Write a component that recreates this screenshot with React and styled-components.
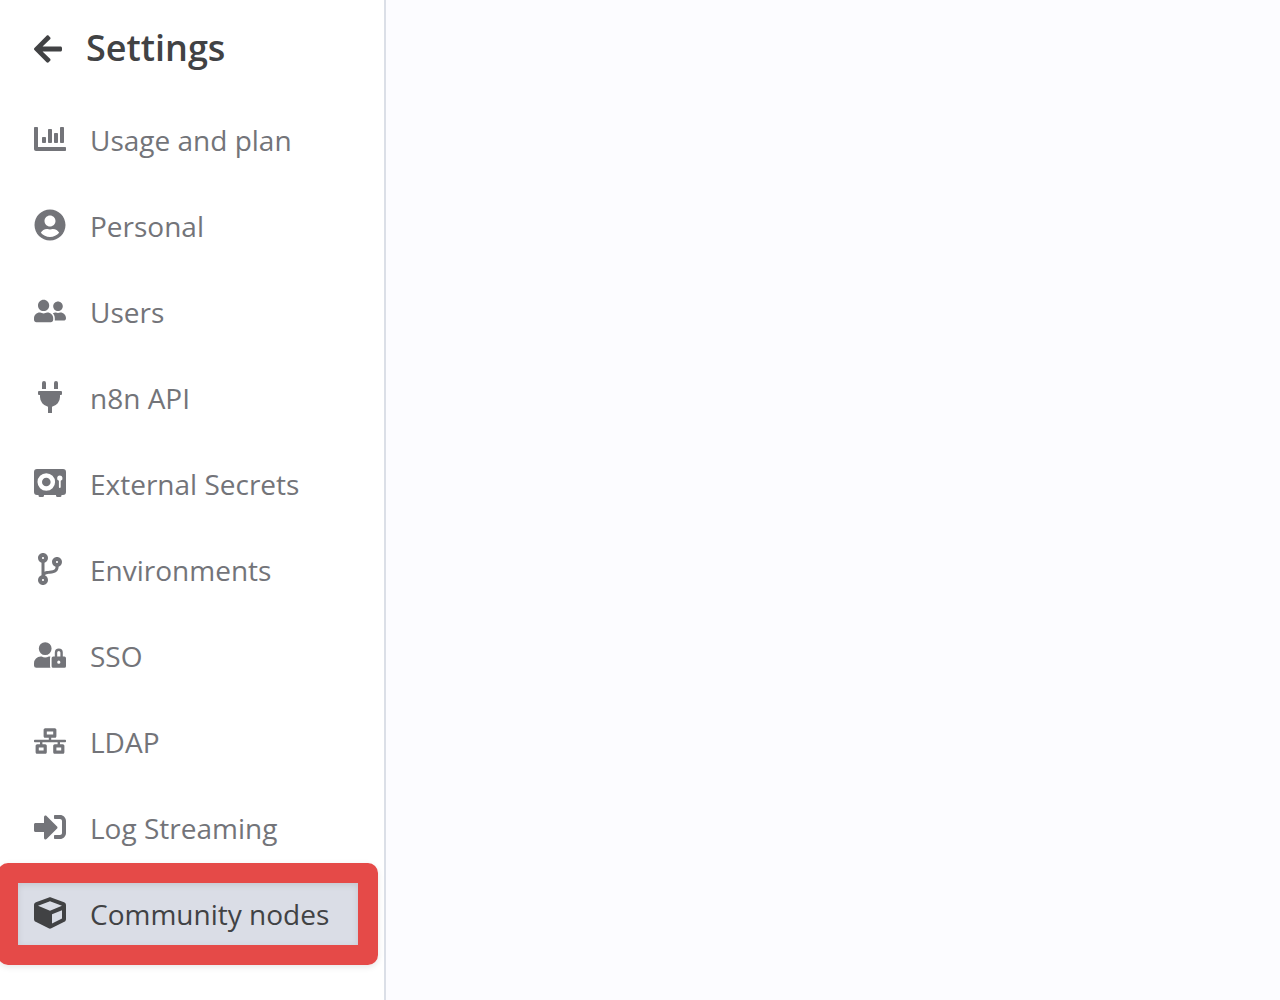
import React from "react";
import styled, { createGlobalStyle } from "styled-components";
import {
  FaArrowLeft,
  FaUserCircle,
  FaUserFriends,
  FaPlug,
  FaCodeBranch,
  FaUserLock,
  FaNetworkWired,
  FaSignInAlt,
  FaCube,
  FaChartBar,
} from "react-icons/fa";

const VaultIcon = () => (
  <svg viewBox="0 0 32 32" width="32" height="32" fill="currentColor">
    <path
      fillRule="evenodd"
      d="M3 2h26a3 3 0 0 1 3 3v20a3 3 0 0 1-3 3H3a3 3 0 0 1-3-3V5a3 3 0 0 1 3-3zM12.300 6.200a8.800 8.800 0 1 0 0 17.600a8.800 8.800 0 0 0 0-17.600zM25.800 8.500a2.700 2.700 0 0 0-.9 5.250V20a.9.9 0 0 0 1.800 0v-6.250a2.700 2.700 0 0 0-.9-5.250z"
    />
    <circle cx="12.3" cy="15" r="4.300" />
    <path d="M4.500 27h5.500v1.500a1.500 1.500 0 0 1-1.500 1.500h-2.500a1.500 1.500 0 0 1-1.500-1.500zM22 27h5.500v1.500a1.500 1.500 0 0 1-1.500 1.500h-2.500a1.500 1.500 0 0 1-1.500-1.500z" />
  </svg>
);

const items = [
  { label: "Usage and plan", icon: FaChartBar },
  { label: "Personal", icon: FaUserCircle },
  { label: "Users", icon: FaUserFriends },
  { label: "n8n API", icon: FaPlug },
  { label: "External Secrets", icon: VaultIcon },
  { label: "Environments", icon: FaCodeBranch },
  { label: "SSO", icon: FaUserLock },
  { label: "LDAP", icon: FaNetworkWired },
  { label: "Log Streaming", icon: FaSignInAlt },
  { label: "Community nodes", icon: FaCube, active: true },
];

const App = () => {
  return (
    <Page>
      <GlobalStyle />
      <Sidebar>
        <Header>
          <BackButton type="button" aria-label="Back">
            <FaArrowLeft />
          </BackButton>
          <Title>Settings</Title>
        </Header>
        <Menu>
          {items.map(({ label, icon: Icon, active }) => (
            <MenuItem key={label}>
              <MenuLink href="#" $active={active}>
                <IconBox>
                  <Icon />
                </IconBox>
                {label}
              </MenuLink>
              {active && <Highlight />}
            </MenuItem>
          ))}
        </Menu>
      </Sidebar>
      <Content />
    </Page>
  );
};

export default App;

const GlobalStyle = createGlobalStyle`
  * {
    box-sizing: border-box;
  }

  body {
    margin: 0;
    font-family: "Open Sans", sans-serif;
    background-color: #fcfcff;
  }
`;

const Page = styled.div`
  display: flex;
  min-height: 100vh;
`;

const Sidebar = styled.aside`
  flex: 0 0 386px;
  background-color: #ffffff;
  border-right: 2px solid #dbdfe7;
`;

const Content = styled.main`
  flex: 1;
`;

const Header = styled.header`
  display: flex;
  align-items: center;
  gap: 24px;
  padding: 24px 34px;
  color: #414244;
`;

const BackButton = styled.button`
  display: flex;
  justify-content: center;
  width: 28px;
  padding: 2px 0 0;
  border: none;
  background: none;
  color: inherit;
  font-size: 32px;
  cursor: pointer;

  svg {
    flex-shrink: 0;
  }
`;

const Title = styled.h1`
  margin: 0;
  font-size: 36px;
  line-height: 48px;
  font-weight: 600;
`;

const Menu = styled.ul`
  display: flex;
  flex-direction: column;
  gap: 24px;
  margin: 0;
  padding: 13px 26px 36px 18px;
  list-style: none;
`;

const MenuItem = styled.li`
  position: relative;
`;

const MenuLink = styled.a`
  display: flex;
  align-items: center;
  gap: 24px;
  height: 62px;
  padding: 0 16px;
  font-size: 28px;
  line-height: 36px;
  white-space: nowrap;
  text-decoration: none;
  color: ${({ $active }) => ($active ? "#414244" : "#737479")};
  background-color: ${({ $active }) => ($active ? "#dadde6" : "transparent")};
  box-shadow: ${({ $active }) =>
    $active ? "inset 0 2px 6px rgba(0, 0, 0, 0.1)" : "none"};
`;

const Highlight = styled.span`
  position: absolute;
  inset: -20px;
  border: 20px solid #e54a48;
  border-radius: 10px;
  box-shadow: 0 2px 6px rgba(0, 0, 0, 0.1);
  pointer-events: none;
`;

const IconBox = styled.span`
  display: flex;
  justify-content: center;
  width: 32px;
  padding-bottom: 2px;
  font-size: 32px;

  svg {
    flex-shrink: 0;
  }
`;
